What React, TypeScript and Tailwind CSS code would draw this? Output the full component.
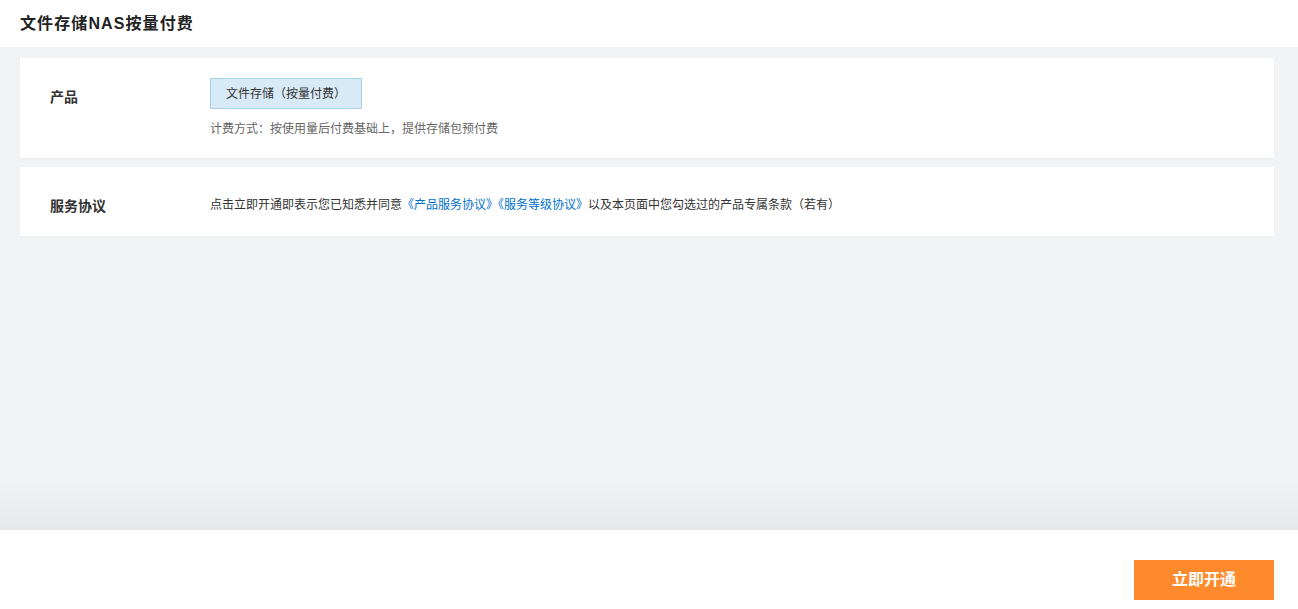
export default function App() {
  const font = { fontFamily: '"Helvetica Neue", "Liberation Sans", "Noto Sans CJK SC", sans-serif' };
  return (
    <div className="flex h-[609px] flex-col overflow-hidden bg-[#f2f3f5] text-[#333]" style={font}>
      {/* Header */}
      <div className="flex h-[47px] shrink-0 items-center bg-white px-5">
        <h1 className="text-[16px] font-bold tracking-[1.1px] text-[#222]">文件存储NAS按量付费</h1>
      </div>

      {/* Content */}
      <div className="relative flex-1 pl-5 pr-6 pt-[11px]">
        <div className="flex h-[100px] bg-white pl-[30px] pt-5 shadow-[0_1px_2px_rgba(0,0,0,0.03)]">
          <div className="w-[160px] pt-[9px] text-[14px] font-bold text-[#333]">产品</div>
          <div>
            <div className="flex h-[31px] w-[152px] items-center justify-center border border-[#a6d2ea] bg-[#d8eaf6] text-[12px] text-[#333]">
              文件存储（按量付费）
            </div>
            <div className="mt-[11px] text-[12px] text-[#666]">计费方式：按使用量后付费基础上，提供存储包预付费</div>
          </div>
        </div>

        <div className="mt-[9px] flex h-[69px] items-start bg-white pl-[30px] pt-[28px] shadow-[0_1px_2px_rgba(0,0,0,0.03)]">
          <div className="w-[160px] pt-[1px] text-[14px] font-bold text-[#333]">服务协议</div>
          <div className="pt-[1px] text-[12px] text-[#333]">
            点击立即开通即表示您已知悉并同意
            <a className="text-[#0070cc]" href="#">《产品服务协议》</a>
            <a className="text-[#0070cc]" href="#">《服务等级协议》</a>
            以及本页面中您勾选过的产品专属条款（若有）
          </div>
        </div>

        <div className="absolute bottom-0 left-0 right-0 h-[50px] bg-gradient-to-b from-[#f2f3f5] to-[#e7e8ea]" />
      </div>

      {/* Footer */}
      <div className="flex h-[79px] shrink-0 justify-end bg-white pr-6 pt-[30px]">
        <button className="h-10 w-[140px] bg-[#ff8a2b] text-[16px] font-bold text-white">立即开通</button>
      </div>
    </div>
  );
}
